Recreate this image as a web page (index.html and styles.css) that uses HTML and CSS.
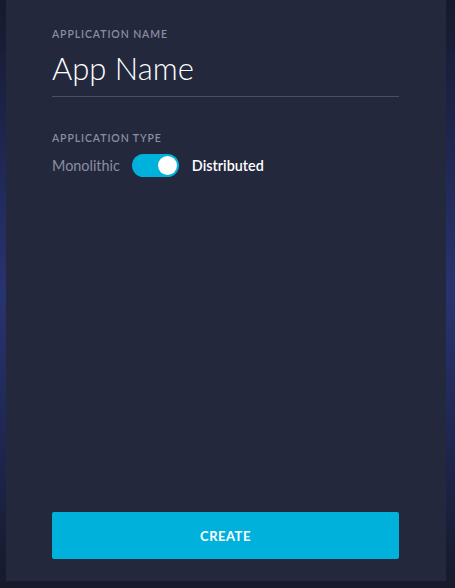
FILE: index.html
```html
<!DOCTYPE html>
<html>
<head>
<meta charset="utf-8">
<link rel="stylesheet" href="styles.css">
</head>
<body>
<div class="panel">
  <div class="field">
    <div class="label">Application Name</div>
    <div class="name-input">App Name</div>
  </div>
  <div class="field type-field">
    <div class="label">Application Type</div>
    <div class="toggle-row">
      <span class="opt off">Monolithic</span>
      <span class="switch"><span class="knob"></span></span>
      <span class="opt on">Distributed</span>
    </div>
  </div>
  <div class="spacer"></div>
  <button class="create">CREATE</button>
</div>
</body>
</html>
```

FILE: styles.css
```css
html, body {
  margin: 0;
  padding: 0;
  height: 100%;
}
body {
  background: linear-gradient(to bottom, #161a2c 0%, #1f2650 25%, #283470 50%, #1f2650 75%, #161a2a 100%);
  font-family: Lato, "Open Sans", sans-serif;
  overflow: hidden;
}
.panel {
  box-sizing: border-box;
  margin: 0 9px 0 6px;
  height: 581px;
  background: #23283d;
  padding: 28px 47px 22px 46px;
  display: flex;
  flex-direction: column;
}
.label {
  font-size: 10.5px;
  font-weight: 600;
  letter-spacing: 0.9px;
  text-transform: uppercase;
  color: #8a8ea0;
  line-height: 13px;
}
.name-input {
  font-size: 31px;
  font-weight: 300;
  color: #ffffff;
  line-height: 38px;
  margin-top: 8px;
  padding-bottom: 9px;
  border-bottom: 1px solid #4a4f62;
}
.type-field {
  margin-top: 35px;
}
.toggle-row {
  display: flex;
  align-items: center;
  margin-top: 9px;
  height: 23px;
}
.opt {
  font-size: 14.4px;
  line-height: 17px;
}
.off {
  color: #8a8ea0;
}
.on {
  color: #ffffff;
  font-weight: 600;
}
.switch {
  width: 47px;
  height: 23px;
  border-radius: 12px;
  background: #00b1dc;
  margin: 0 13px 0 12px;
  display: flex;
  align-items: center;
  justify-content: flex-end;
  padding-right: 2px;
  box-sizing: border-box;
}
.knob {
  width: 19px;
  height: 19px;
  border-radius: 50%;
  background: #ffffff;
}
.spacer {
  flex: 1;
}
.create {
  height: 47px;
  border: 0;
  border-radius: 2px;
  background: #00b1dc;
  color: #ffffff;
  font-family: Lato, "Open Sans", sans-serif;
  font-size: 13px;
  font-weight: 700;
  letter-spacing: 0.5px;
  cursor: pointer;
}
```
